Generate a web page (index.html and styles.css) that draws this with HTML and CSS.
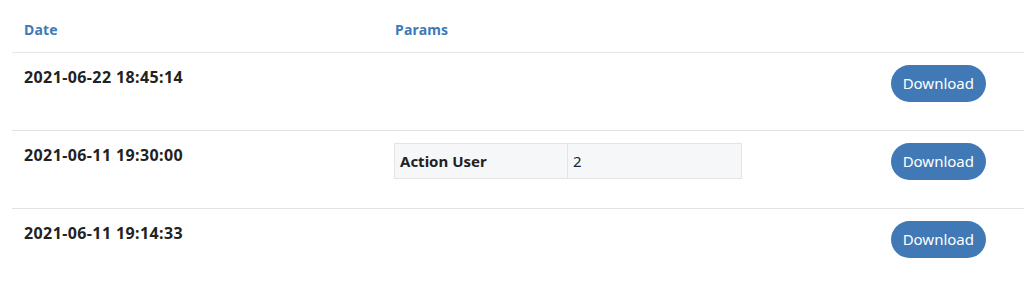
FILE: index.html
```html
<!DOCTYPE html>
<html>
<head>
<meta charset="utf-8">
<link rel="stylesheet" href="styles.css">
</head>
<body>
<div class="wrap">
  <table class="log">
    <thead>
      <tr>
        <th class="c-date">Date</th>
        <th class="c-params">Params</th>
        <th class="c-act"></th>
      </tr>
    </thead>
    <tbody>
      <tr>
        <td class="c-date"><span class="date">2021-06-22 18:45:14</span></td>
        <td class="c-params"></td>
        <td class="c-act"><button class="btn">Download</button></td>
      </tr>
      <tr>
        <td class="c-date"><span class="date">2021-06-11 19:30:00</span></td>
        <td class="c-params">
          <table class="params">
            <tr><th>Action User</th><td>2</td></tr>
          </table>
        </td>
        <td class="c-act"><button class="btn">Download</button></td>
      </tr>
      <tr>
        <td class="c-date"><span class="date">2021-06-11 19:14:33</span></td>
        <td class="c-params"></td>
        <td class="c-act"><button class="btn">Download</button></td>
      </tr>
    </tbody>
  </table>
</div>
</body>
</html>
```
FILE: styles.css
```css
html, body {
  margin: 0;
  padding: 0;
  background: #fff;
}
body {
  font-family: "Noto Sans", "Open Sans", sans-serif;
  color: #222;
}
.wrap {
  padding-left: 12px;
}
.log {
  width: 1012px;
  border-collapse: collapse;
  table-layout: fixed;
}
.log > thead > tr > th {
  text-align: left;
  color: #3e7ab7;
  font-size: 14px;
  font-weight: 700;
  letter-spacing: 0.2px;
  line-height: 20px;
  padding: 20px 12px 12px;
  border-bottom: 1px solid #e6e6e6;
}
.log > tbody > tr > td {
  vertical-align: top;
  padding: 12px 12px 28px;
  border-bottom: 1px solid #e2e2e2;
  height: 37px;
}
.log > tbody > tr:last-child > td {
  border-bottom: none;
}
.log .c-date { width: 347px; }
.log .c-params { width: auto; }
.log .c-act { width: 140px; text-align: right; }
.log > tbody > tr > td.c-act,
.log > thead > tr > th.c-act { padding-right: 38px; }
.date {
  display: block;
  font-size: 16px;
  font-weight: 700;
  letter-spacing: 0.4px;
  line-height: 22px;
  padding-top: 1px;
  color: #222;
}
.params {
  border-collapse: collapse;
  width: 348px;
  margin-left: -1px;
  table-layout: fixed;
  font-size: 15px;
  line-height: 22px;
  color: #222;
}
.params th, .params td {
  border: 1px solid #e3e4e6;
  background: #f6f7f9;
  text-align: left;
  padding: 6px 5px;
}
.params th {
  width: 162px;
  font-weight: 700;
}
.params td {
  font-weight: 400;
}
.btn {
  display: inline-block;
  height: 37px;
  padding: 0 12px;
  border: none;
  border-radius: 19px;
  background: #4079b5;
  color: #fff;
  font-family: "Noto Sans", "Open Sans", sans-serif;
  font-size: 15px;
  line-height: 37px;
}
```
